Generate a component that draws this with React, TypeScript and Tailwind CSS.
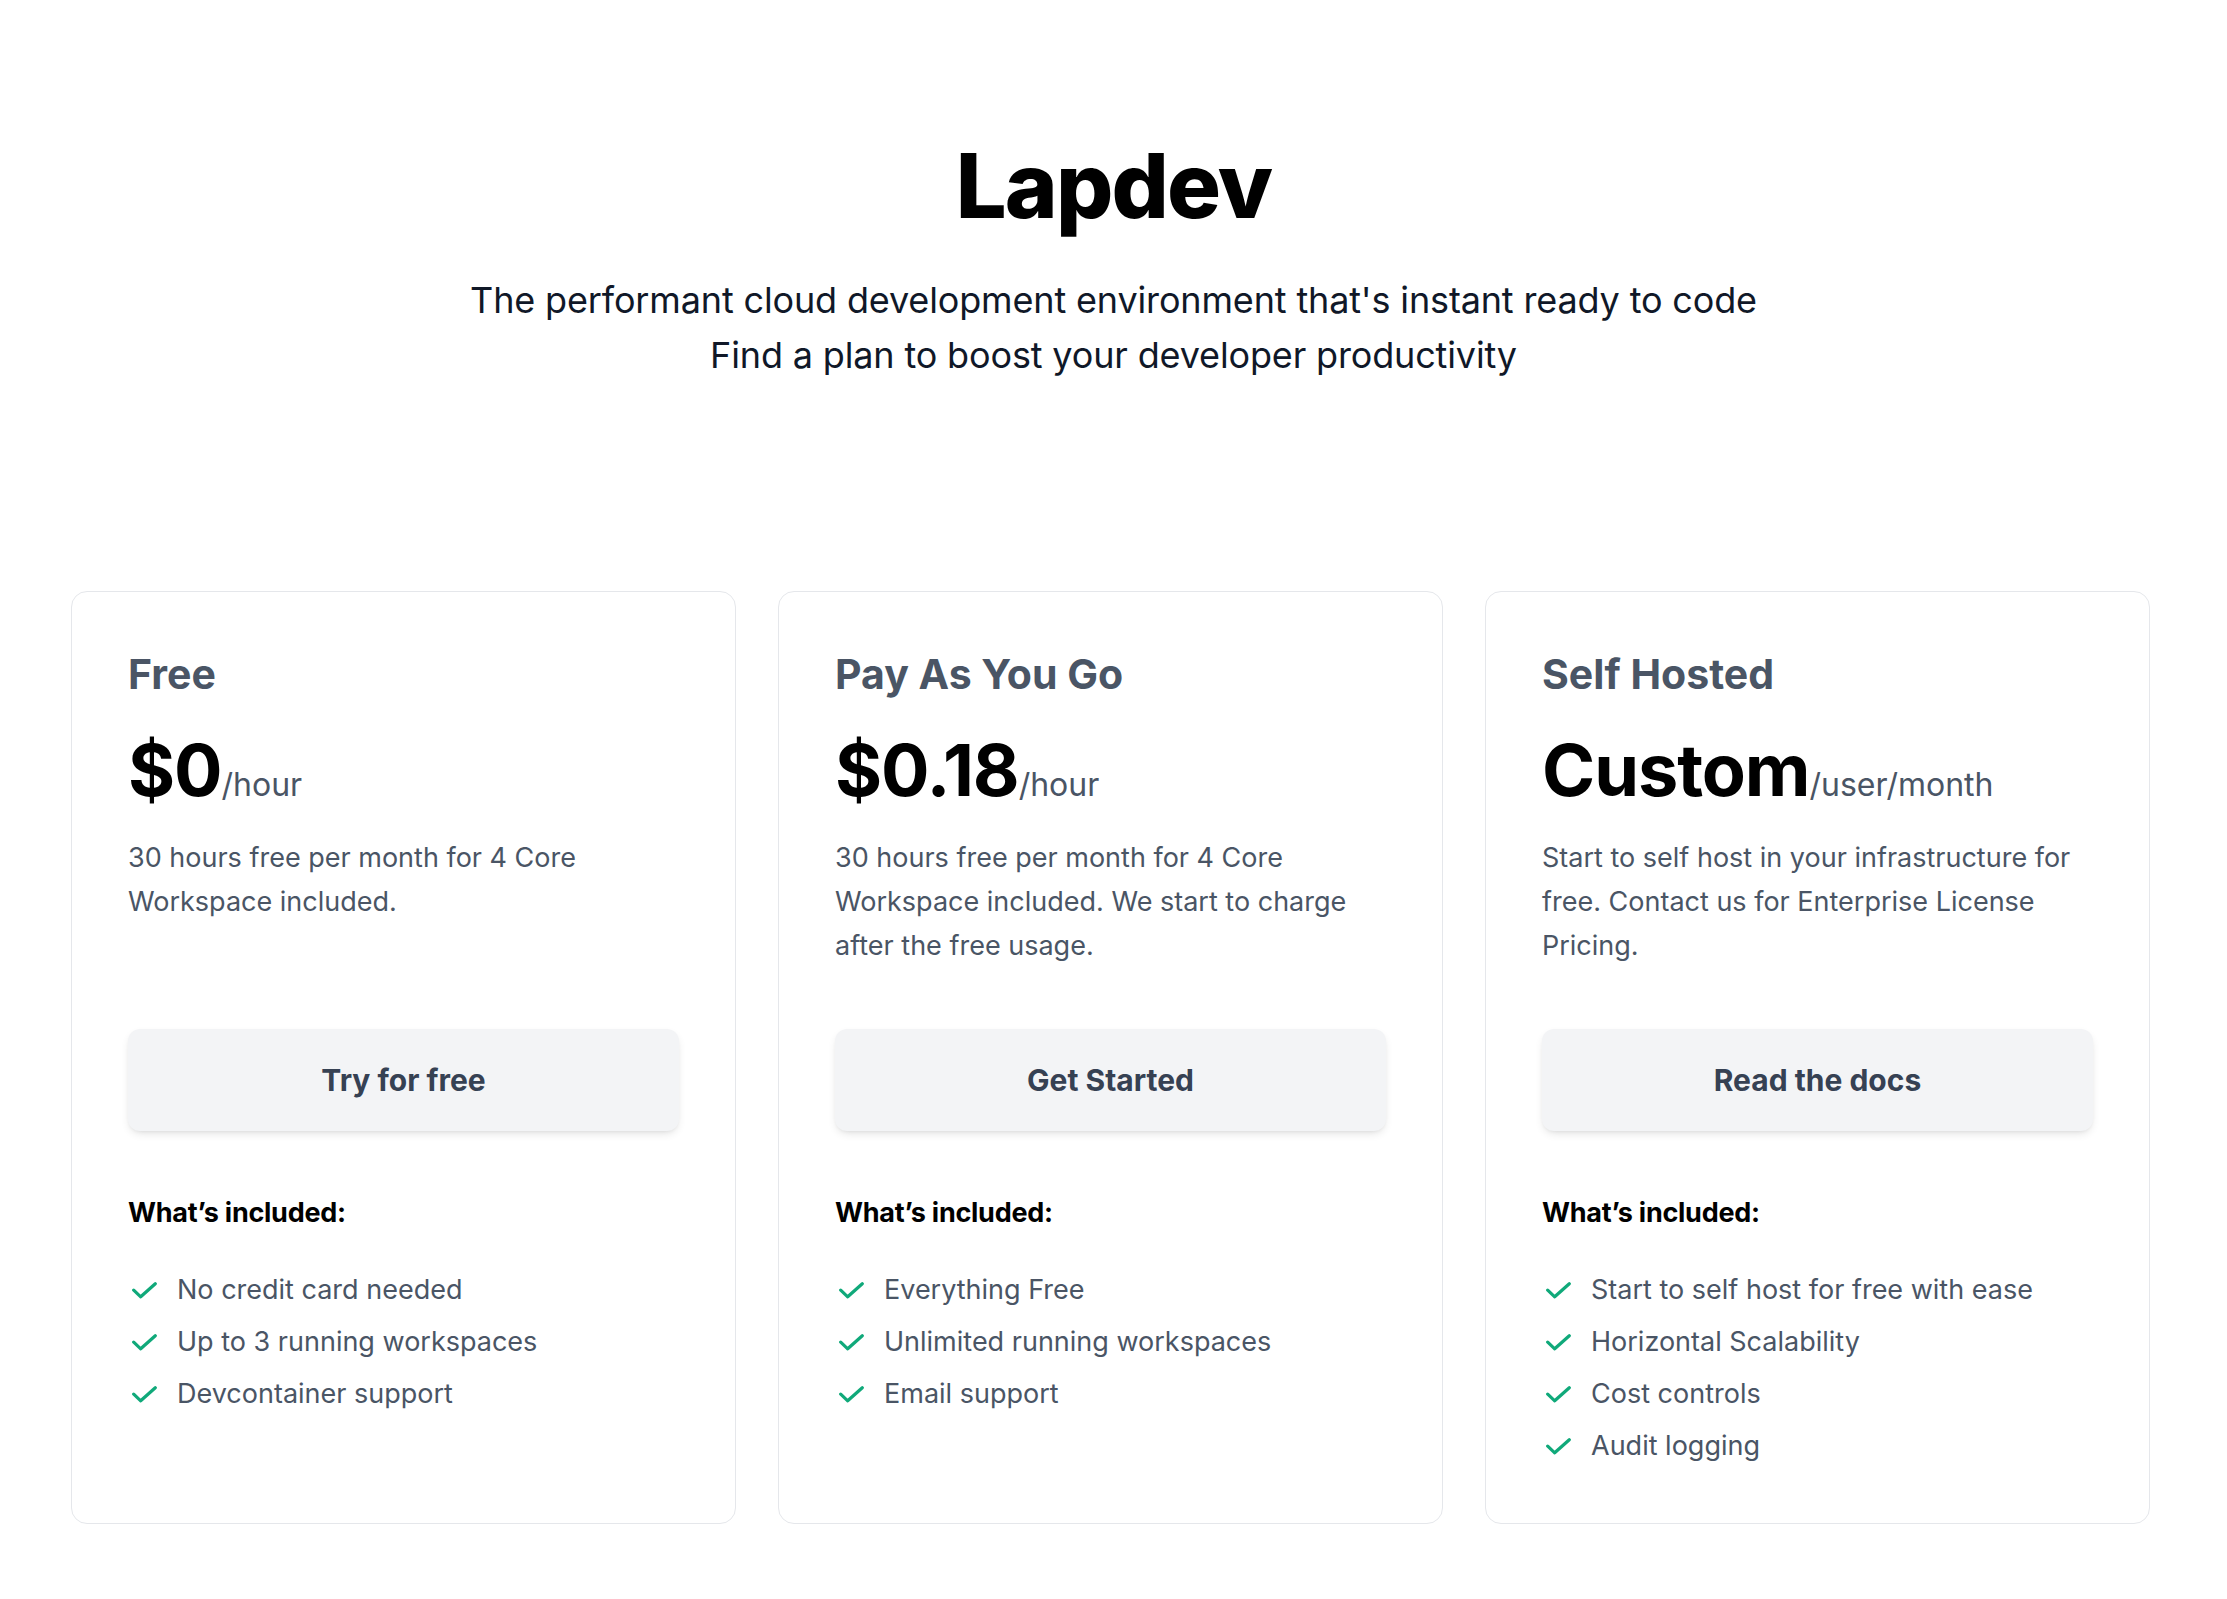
import React from "react";

type Plan = {
  name: string;
  price: string;
  unit: string;
  desc: string;
  cta: string;
  features: string[];
};

const plans: Plan[] = [
  {
    name: "Free",
    price: "$0",
    unit: "/hour",
    desc: "30 hours free per month for 4 Core Workspace included.",
    cta: "Try for free",
    features: ["No credit card needed", "Up to 3 running workspaces", "Devcontainer support"],
  },
  {
    name: "Pay As You Go",
    price: "$0.18",
    unit: "/hour",
    desc: "30 hours free per month for 4 Core Workspace included. We start to charge after the free usage.",
    cta: "Get Started",
    features: ["Everything Free", "Unlimited running workspaces", "Email support"],
  },
  {
    name: "Self Hosted",
    price: "Custom",
    unit: "/user/month",
    desc: "Start to self host in your infrastructure for free. Contact us for Enterprise License Pricing.",
    cta: "Read the docs",
    features: ["Start to self host for free with ease", "Horizontal Scalability", "Cost controls", "Audit logging"],
  },
];

function CheckIcon() {
  return (
    <svg width="25" height="17" viewBox="0 0 25 17" fill="none" className="ml-[4px] shrink-0">
      <polyline
        points="1.7,8.2 8.7,14.8 23.3,1.7"
        stroke="#10a97a"
        strokeWidth="3.2"
        strokeLinecap="round"
        strokeLinejoin="round"
      />
    </svg>
  );
}

function PlanCard({ plan }: { plan: Plan }) {
  return (
    <div className="flex flex-col rounded-2xl border border-gray-200 bg-white px-[56px] pt-[62px] pb-[55px]">
      <h3 className="text-[41px] leading-[40px] font-bold text-gray-600">{plan.name}</h3>
      <div className="mt-[40px] flex items-baseline">
        <span className="text-[72px] leading-[72px] font-bold tracking-[-0.015em] text-black">{plan.price}</span>
        <span className="text-[32px] text-gray-600">{plan.unit}</span>
      </div>
      <p className="mt-[27px] h-[132px] text-[27px] leading-[44px] text-gray-600">{plan.desc}</p>
      <button className="mt-[61px] h-[102px] w-full rounded-xl bg-gray-100 text-[30px] font-bold text-gray-700 shadow-[0_4px_10px_-2px_rgba(0,0,0,0.12),0_2px_4px_-2px_rgba(0,0,0,0.08)]">
        {plan.cta}
      </button>
      <h4 className="mt-[62px] text-[27px] leading-[40px] font-bold tracking-[-0.01em] text-black">What’s included:</h4>
      <ul className="mt-[35px] flex flex-col gap-[8px]">
        {plan.features.map((f) => (
          <li key={f} className="flex items-center gap-[20px] text-[27px] leading-[44px] text-gray-600">
            <CheckIcon />
            <span>{f}</span>
          </li>
        ))}
      </ul>
    </div>
  );
}

export default function App() {
  return (
    <div className="min-h-screen bg-white font-['Inter',sans-serif]">
      <section className="flex flex-col items-center pt-[141px] text-center">
        <h1 className="text-[90px] leading-[90px] font-extrabold tracking-[-0.02em] text-black">Lapdev</h1>
        <div className="mt-[42px] text-[36px] leading-[55px] tracking-[-0.15px] text-gray-900">
          <p>The performant cloud development environment that's instant ready to code</p>
          <p>Find a plan to boost your developer productivity</p>
        </div>
      </section>
      <div className="ml-[71px] mt-[208px] grid w-[2079px] grid-cols-3 gap-[42px] pb-[75px]">
        {plans.map((p) => (
          <PlanCard key={p.name} plan={p} />
        ))}
      </div>
    </div>
  );
}
